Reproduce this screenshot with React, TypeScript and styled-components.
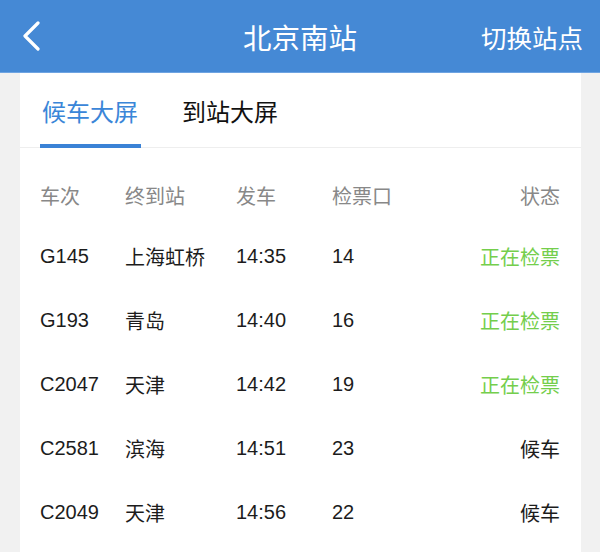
import React from "react";
import styled, { createGlobalStyle } from "styled-components";

const GlobalStyle = createGlobalStyle`
  html, body {
    margin: 0;
    padding: 0;
    background: #f1f1f1;
    font-family: "Liberation Sans", "Noto Sans CJK SC", sans-serif;
  }
`;

const Page = styled.div`
  width: 600px;
  height: 552px;
  overflow: hidden;
  display: flex;
  flex-direction: column;
  background: #f1f1f1;
`;

const NavBar = styled.header`
  height: 72px;
  flex-shrink: 0;
  display: flex;
  align-items: center;
  justify-content: space-between;
  padding: 0 17px 0 22px;
  background: #4589d5;
  border-bottom: 1px solid #6ea4e2;
  color: #fff;
  position: relative;
`;

const BackButton = styled.button`
  width: 24px;
  height: 36px;
  padding: 0;
  border: none;
  background: none;
  display: flex;
  align-items: center;
  cursor: pointer;
`;

const Title = styled.h1`
  position: absolute;
  left: 0;
  right: 0;
  margin: 0;
  text-align: center;
  font-size: 28.5px;
  font-weight: 400;
  pointer-events: none;
`;

const SwitchLink = styled.span`
  font-size: 25.5px;
`;

const Card = styled.main`
  flex: 1;
  margin: 0 19px 0 20px;
  background: #fff;
  display: flex;
  flex-direction: column;
`;

const TabBar = styled.nav`
  height: 74px;
  display: flex;
  align-items: stretch;
  gap: 39px;
  padding: 0 20px;
  border-bottom: 1px solid #eeeeee;
`;

const Tab = styled.div<{ $active?: boolean }>`
  display: flex;
  align-items: center;
  padding: 4px 3px 0 2px;
  font-size: 24px;
  color: ${(p) => (p.$active ? "#3a86d8" : "#111")};
  border-bottom: 4px solid ${(p) => (p.$active ? "#3a82d6" : "transparent")};
  margin-bottom: -1px;
`;

const Table = styled.div`
  padding: 18px 21px 0 20px;
`;

const Row = styled.div<{ $head?: boolean }>`
  display: grid;
  grid-template-columns: 85px 111px 96px 1fr auto;
  align-items: center;
  height: ${(p) => (p.$head ? "58px" : "64px")};
  font-size: 20px;
  color: ${(p) => (p.$head ? "#888" : "#1c1c1c")};
`;

const Status = styled.span<{ $checking?: boolean }>`
  text-align: right;
  color: ${(p) => (p.$checking ? "#74ce4c" : "#1c1c1c")};
`;

const HeadStatus = styled.span`
  text-align: right;
`;

type Train = {
  no: string;
  dest: string;
  time: string;
  gate: string;
  checking: boolean;
};

const trains: Train[] = [
  { no: "G145", dest: "上海虹桥", time: "14:35", gate: "14", checking: true },
  { no: "G193", dest: "青岛", time: "14:40", gate: "16", checking: true },
  { no: "C2047", dest: "天津", time: "14:42", gate: "19", checking: true },
  { no: "C2581", dest: "滨海", time: "14:51", gate: "23", checking: false },
  { no: "C2049", dest: "天津", time: "14:56", gate: "22", checking: false },
];

export default function App() {
  return (
    <>
      <GlobalStyle />
      <Page>
        <NavBar>
          <BackButton aria-label="返回">
            <svg width="18" height="30" viewBox="0 0 18 30">
              <path
                d="M16 2 L3 15 L16 28"
                fill="none"
                stroke="#fff"
                strokeWidth="3.2"
                strokeLinecap="round"
                strokeLinejoin="round"
              />
            </svg>
          </BackButton>
          <Title>北京南站</Title>
          <SwitchLink>切换站点</SwitchLink>
        </NavBar>
        <Card>
          <TabBar>
            <Tab $active>候车大屏</Tab>
            <Tab>到站大屏</Tab>
          </TabBar>
          <Table>
            <Row $head>
              <span>车次</span>
              <span>终到站</span>
              <span>发车</span>
              <span>检票口</span>
              <HeadStatus>状态</HeadStatus>
            </Row>
            {trains.map((t) => (
              <Row key={t.no}>
                <span>{t.no}</span>
                <span>{t.dest}</span>
                <span>{t.time}</span>
                <span>{t.gate}</span>
                <Status $checking={t.checking}>
                  {t.checking ? "正在检票" : "候车"}
                </Status>
              </Row>
            ))}
          </Table>
        </Card>
      </Page>
    </>
  );
}
